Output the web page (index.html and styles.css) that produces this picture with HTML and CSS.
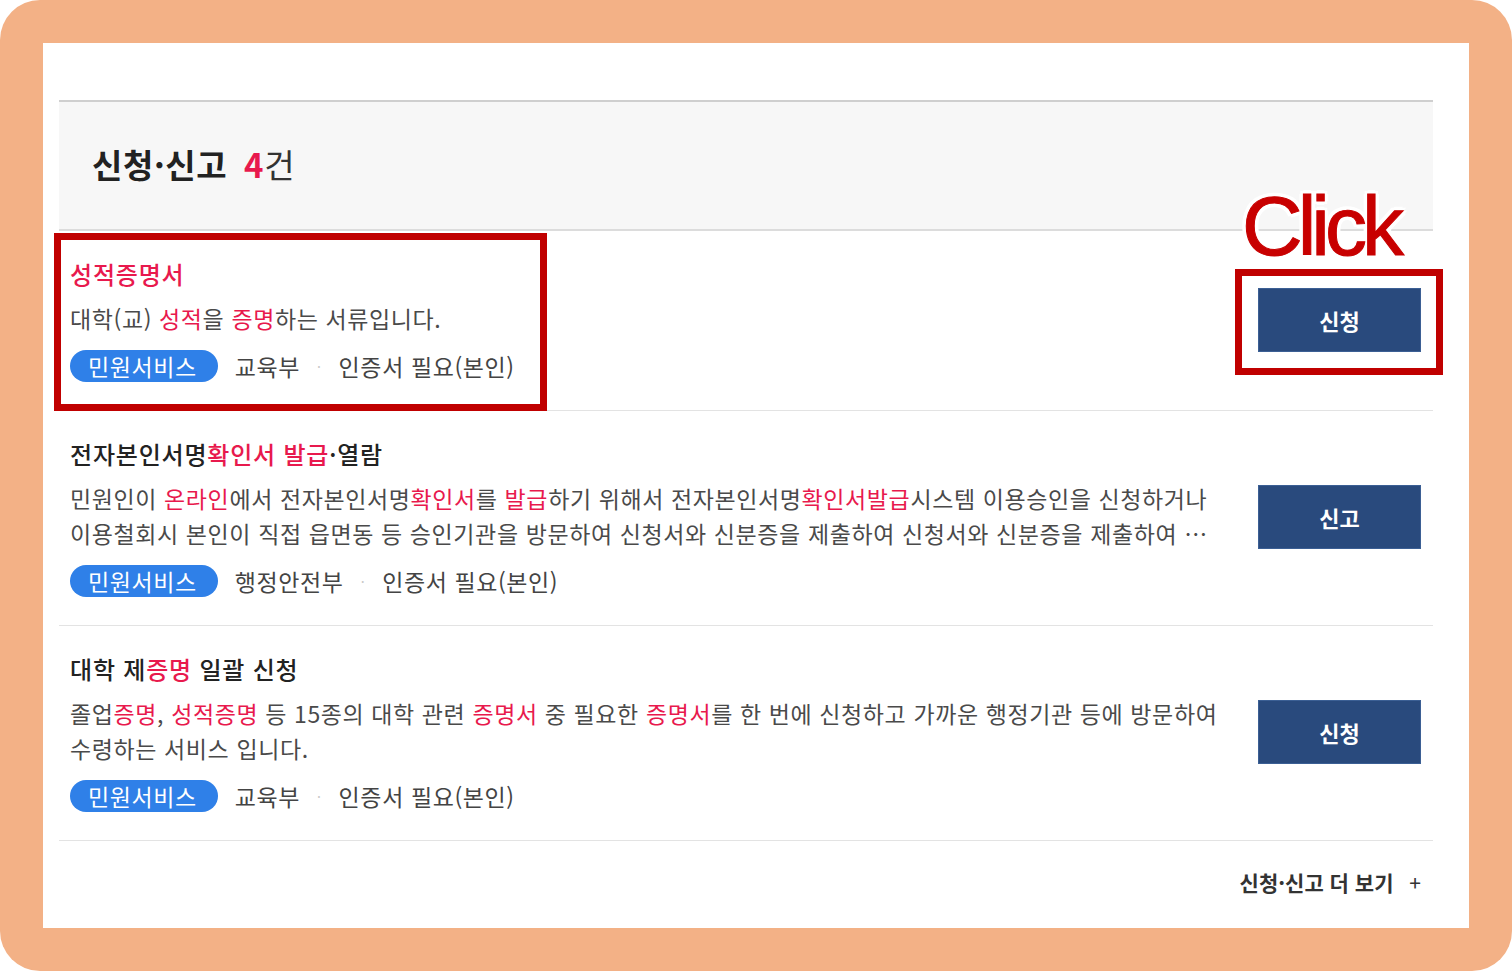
FILE: index.html
```html
<!DOCTYPE html>
<html lang="ko">
<head>
    <meta charset="UTF-8">
    <meta name="viewport" content="width=device-width, initial-scale=1.0">
    <title>신청·신고</title>
    <link rel="stylesheet" href="styles.css">
</head>
<body>
    <div class="frame">
        <div class="panel">
            <!-- Header -->
            <div class="result-head">
                <h2>신청·신고 <em>4</em><span>건</span></h2>
            </div>

            <!-- List -->
            <ul class="result-list">
                <li class="result-item">
                    <div class="item-body">
                        <p class="item-title"><mark>성적증명서</mark></p>
                        <p class="item-desc">대학(교) <mark>성적</mark>을 <mark>증명</mark>하는 서류입니다.</p>
                        <div class="item-meta">
                            <span class="badge">민원서비스</span>
                            <span>교육부</span>
                            <span class="dot">·</span>
                            <span>인증서 필요(본인)</span>
                        </div>
                    </div>
                    <a class="btn-apply" href="#">신청</a>
                </li>
                <li class="result-item">
                    <div class="item-body">
                        <p class="item-title">전자본인서명<mark>확인서</mark> <mark>발급</mark>·열람</p>
                        <p class="item-desc clamp">민원인이 <mark>온라인</mark>에서 전자본인서명<mark>확인서</mark>를 <mark>발급</mark>하기 위해서 전자본인서명<mark>확인서발급</mark>시스템 이용승인을 신청하거나 이용철회시 본인이 직접 읍면동 등 승인기관을 방문하여 신청서와 신분증을 제출하여 신청서와 신분증을 제출하여 신청서와 신분증을 제출하여 이용을 철회할 수 있습니다.</p>
                        <div class="item-meta">
                            <span class="badge">민원서비스</span>
                            <span>행정안전부</span>
                            <span class="dot">·</span>
                            <span>인증서 필요(본인)</span>
                        </div>
                    </div>
                    <a class="btn-apply" href="#">신고</a>
                </li>
                <li class="result-item">
                    <div class="item-body">
                        <p class="item-title">대학 제<mark>증명</mark> 일괄 신청</p>
                        <p class="item-desc">졸업<mark>증명</mark>, <mark>성적증명</mark> 등 15종의 대학 관련 <mark>증명서</mark> 중 필요한 <mark>증명서</mark>를 한 번에 신청하고 가까운 행정기관 등에 방문하여 수령하는 서비스 입니다.</p>
                        <div class="item-meta">
                            <span class="badge">민원서비스</span>
                            <span>교육부</span>
                            <span class="dot">·</span>
                            <span>인증서 필요(본인)</span>
                        </div>
                    </div>
                    <a class="btn-apply" href="#">신청</a>
                </li>
            </ul>

            <div class="more">
                <a href="#">신청·신고 더 보기 <span class="plus">+</span></a>
            </div>
        </div>
    </div>

    <!-- Guide marks -->
    <div class="guide guide-item"></div>
    <div class="guide guide-btn"></div>
    <div class="guide-label">Click</div>
</body>
</html>
```

FILE: styles.css
```css
* {
    margin: 0;
    padding: 0;
    box-sizing: border-box;
}

body {
    font-family: 'Noto Sans CJK KR', 'Noto Sans', sans-serif;
    background: #ffffff;
    width: 1512px;
    height: 971px;
    position: relative;
    overflow: hidden;
}

.frame {
    height: 971px;
    background: #f3b186;
    border-radius: 40px;
    padding: 43px;
}

.panel {
    height: 885px;
    background: #ffffff;
    padding: 57px 36px 0 16px;
}

.result-head {
    height: 131px;
    background: #f7f7f7;
    border-top: 2px solid #cfcfcf;
    border-bottom: 2px solid #dcdcdc;
    display: flex;
    align-items: center;
    padding: 0 33px 4px;
}

.result-head h2 {
    font-size: 33px;
    font-weight: 700;
    color: #222;
    letter-spacing: 0.6px;
}

.result-head em {
    font-style: normal;
    color: #e8194d;
    margin-left: 7px;
}

.result-head h2 span {
    font-weight: 400;
    color: #333;
}

.result-list {
    list-style: none;
}

.result-item {
    display: flex;
    align-items: center;
    gap: 40px;
    padding: 26px 12px 28px 11px;
    border-bottom: 1px solid #e3e3e3;
}

.item-body {
    flex: 1;
    min-width: 0;
}

mark {
    background: none;
    color: #e8194d;
}

.item-title {
    font-size: 24px;
    font-weight: 500;
    line-height: 34px;
    height: 34px;
    color: #222;
    letter-spacing: 0.8px;
}

.item-desc {
    margin-top: 10px;
    font-size: 23px;
    line-height: 35px;
    color: #4a4a4a;
    letter-spacing: 0.6px;
}

.item-desc.clamp {
    display: -webkit-box;
    -webkit-line-clamp: 2;
    -webkit-box-orient: vertical;
    overflow: hidden;
}

.item-meta {
    margin-top: 14px;
    height: 32px;
    line-height: 32px;
    display: flex;
    align-items: center;
    gap: 17px;
    font-size: 23px;
    color: #444;
    letter-spacing: 0.6px;
}

.badge {
    height: 32px;
    line-height: 32px;
    padding: 0 21px 0 18px;
    border-radius: 16px;
    background: #2f80e8;
    color: #ffffff;
}

.item-meta .dot {
    color: #c8c8c8;
    font-size: 14px;
}

.btn-apply {
    flex: none;
    width: 163px;
    height: 64px;
    display: flex;
    align-items: center;
    justify-content: center;
    background: #294a7d;
    border: 1px solid #3b5f94;
    color: #ffffff;
    font-size: 22px;
    font-weight: 700;
    text-decoration: none;
}

.more {
    display: flex;
    justify-content: flex-end;
    padding: 26px 12px 0 0;
}

.more a {
    font-size: 21px;
    font-weight: 700;
    color: #333;
    text-decoration: none;
}

.more .plus {
    margin-left: 10px;
    font-weight: 400;
}

.guide {
    position: absolute;
    border: 7px solid #c00000;
}

.guide-item {
    left: 54px;
    top: 233px;
    width: 493px;
    height: 178px;
}

.guide-btn {
    left: 1235px;
    top: 269px;
    width: 208px;
    height: 106px;
}

.guide-label {
    position: absolute;
    left: 1242px;
    top: 184px;
    font-family: 'Liberation Sans', Arial, sans-serif;
    font-size: 84px;
    line-height: 1;
    color: #c80000;
    letter-spacing: -5px;
    -webkit-text-stroke: 1px #c80000;
    text-shadow:
        -4px 0 0 #fff, 4px 0 0 #fff, 0 -4px 0 #fff, 0 4px 0 #fff,
        -3px -3px 0 #fff, 3px -3px 0 #fff, -3px 3px 0 #fff, 3px 3px 0 #fff;
}
```
